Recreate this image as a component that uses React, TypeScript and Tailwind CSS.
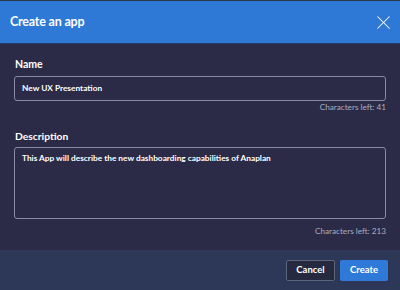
import { X } from 'lucide-react';

export default function App() {
  return (
    <div
      className="w-[400px] h-[290px] flex flex-col bg-[#2c2b47] overflow-hidden"
      style={{ fontFamily: 'Lato, "Noto Sans", sans-serif' }}
    >
      <header className="h-[44px] shrink-0 flex items-center justify-between bg-[#2e78d6] border-t border-t-[#2a3550] border-b border-b-[#263a66] pl-[10px] pr-[5px]">
        <h1 className="text-[12.5px] font-bold text-white tracking-[-0.2px]">Create an app</h1>
        <X className="w-[23px] h-[23px] text-white" strokeWidth={1.1} />
      </header>

      <main className="flex-1 flex flex-col px-[14px] pt-[15px]">
        <label className="text-[10.5px] leading-none font-bold text-white pl-[1px]">Name</label>
        <div className="mt-[6px] h-[25px] flex items-center border border-[#8a8aa3] rounded-[3px] px-[7px] text-[8.3px] font-bold text-white">
          New UX Presentation
        </div>
        <div className="mt-[2px] leading-none text-right text-[8.2px] text-[#a9abc0]">Characters left: 41</div>

        <label className="mt-[20px] text-[10.3px] leading-none font-bold text-white pl-[1px]">Description</label>
        <div className="mt-[6px] h-[72px] border border-[#8a8aa3] rounded-[3px] px-[7px] pt-[5px] leading-[11px] text-[8.3px] font-bold text-white">
          This App will describe the new dashboarding capabilities of Anaplan
        </div>
        <div className="mt-[8px] leading-none text-right text-[8.2px] text-[#a9abc0]">Characters left: 213</div>
      </main>

      <footer className="h-[40px] shrink-0 flex items-center justify-end gap-[5px] bg-[#2d3858] pr-[12px]">
        <button className="h-[21px] w-[49px] border border-[#5d6578] rounded-[2px] bg-[#252a40] text-[9.5px] font-bold text-white">
          Cancel
        </button>
        <button className="h-[21px] w-[48px] rounded-[2px] bg-[#2f7ad8] text-[9.5px] font-bold text-white">
          Create
        </button>
      </footer>
    </div>
  );
}
